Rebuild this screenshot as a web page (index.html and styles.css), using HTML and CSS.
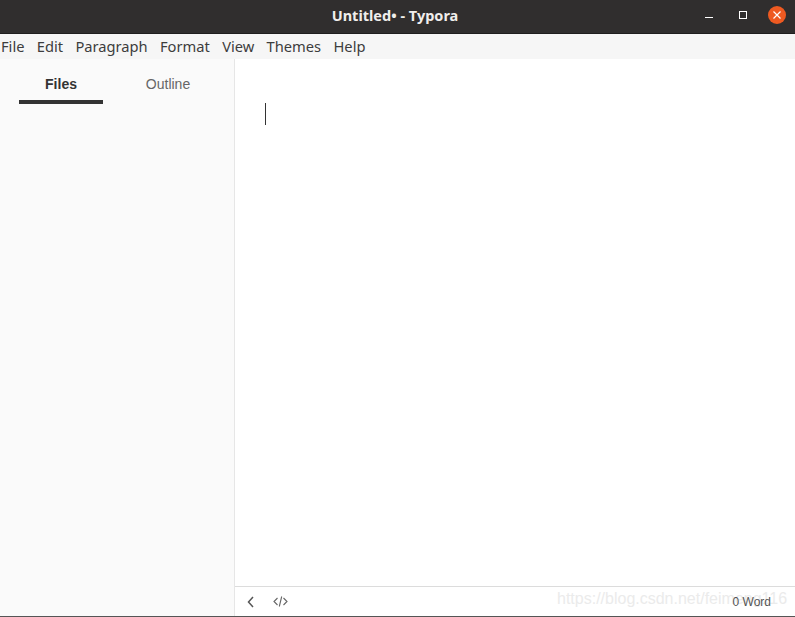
FILE: index.html
```html
<!DOCTYPE html>
<html lang="en">
<head>
<meta charset="utf-8">
<title>Untitled• - Typora</title>
<link rel="stylesheet" href="styles.css">
</head>
<body>
<div class="window">
  <header class="titlebar">
    <div class="title">Untitled• - Typora</div>
    <div class="controls">
      <svg class="ctl-min" width="8" height="1" viewBox="0 0 8 1"><rect width="8" height="1" fill="#fff"/></svg>
      <svg class="ctl-max" width="8" height="8" viewBox="0 0 8 8"><rect x=".5" y=".5" width="7" height="7" fill="none" stroke="#fff"/></svg>
      <span class="ctl-close"><svg width="8" height="8" viewBox="0 0 8 8"><path d="M.5.5l7 7M7.500.5l-7 7" stroke="#fff" stroke-width="1.200"/></svg></span>
    </div>
  </header>
  <nav class="menubar">
    <span>File</span><span>Edit</span><span>Paragraph</span><span>Format</span><span>View</span><span>Themes</span><span>Help</span>
  </nav>
  <div class="main">
    <aside class="sidebar">
      <div class="tabs">
        <div class="tab active">Files</div>
        <div class="tab">Outline</div>
      </div>
    </aside>
    <section class="content">
      <div class="editor"><div class="caret"></div></div>
      <footer class="statusbar">
        <svg class="icon-back" width="8" height="12" viewBox="0 0 8 12"><path d="M6 1L1.500 6 6 11" fill="none" stroke="#555" stroke-width="1.500"/></svg>
        <svg class="icon-code" width="15" height="11" viewBox="0 0 15 11"><path d="M4.500 2L1 5.500 4.500 9M10.500 2L14 5.500 10.500 9M8.700.5L6.300 10.500" fill="none" stroke="#666" stroke-width="1.100"/></svg>
        <span class="watermark">https://blog.csdn.net/feimeng116</span>
        <span class="words">0 Word</span>
      </footer>
    </section>
  </div>
</div>
</body>
</html>
```
FILE: styles.css
```css
* { box-sizing: border-box; }
html, body { margin: 0; height: 100%; overflow: hidden; }
.window {
  width: 795px; height: 617px; display: flex; flex-direction: column;
  background: #fff; border-bottom: 1px solid #555;
}
.titlebar {
  position: relative; flex: 0 0 34px; background: #302e2e; border-bottom: 1px solid #1f1e1e;
  display: flex; align-items: center; justify-content: center;
}
.title {
  font: 700 14.5px/1 "Noto Sans", sans-serif; color: #f0eeec; margin: -2px 5px 0 0;
}
.controls {
  position: absolute; top: 0; right: 0; height: 30px; display: flex; align-items: center;
}
.ctl-min { margin-top: 4px; margin-right: 26px; }
.ctl-max { margin-right: 21px; }
.ctl-close {
  width: 18px; height: 18px; border-radius: 50%; background: #ee5a21;
  display: flex; align-items: center; justify-content: center; margin-right: 9px;
}
.menubar {
  flex: 0 0 25px; background: #f6f6f6; display: flex; align-items: center;
  padding-left: 1px; gap: 12.3px;
  font: 400 14.7px/1 "Noto Sans", sans-serif; color: #3d3d3d;
}
.main { flex: 1; display: flex; min-height: 0; }
.sidebar {
  flex: 0 0 235px; background: #fafafa; border-right: 1px solid #e6e6e6;
  padding: 15px 0 0 19px;
}
.tabs { display: flex; gap: 23px; }
.tab {
  width: 84px; height: 30px; text-align: center;
  font: 400 14px/20px "Liberation Sans", sans-serif; color: #666;
}
.tab.active {
  font-weight: 700; color: #333; border-bottom: 4px solid #333;
}
.content { flex: 1; display: flex; flex-direction: column; min-width: 0; }
.editor { flex: 1; padding: 44px 0 0 30px; }
.caret { width: 1px; height: 22px; background: #333; }
.statusbar {
  position: relative; flex: 0 0 30px; border-top: 1px solid #dcdcdc;
  display: flex; align-items: center; padding-left: 12px;
}
.icon-code { margin-left: 18px; }
.watermark {
  position: absolute; left: 322px; top: 2px; white-space: nowrap;
  font: 400 16px/20px "Liberation Sans", sans-serif; color: #ebebeb;
}
.words {
  position: absolute; right: 24px; top: 8px;
  font: 400 12px/14px "Liberation Sans", sans-serif; color: #555;
}
```
